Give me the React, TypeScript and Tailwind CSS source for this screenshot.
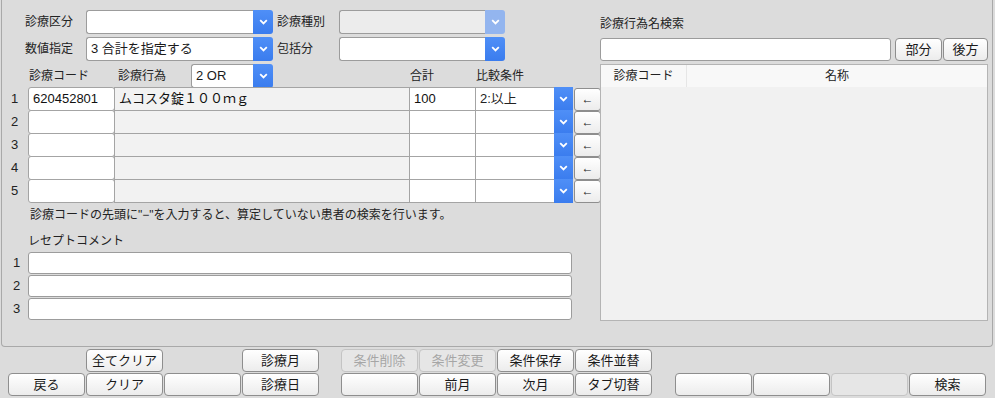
import { ReactNode } from 'react';

const FONT = '"Liberation Sans", "Noto Sans CJK JP", sans-serif';

function Chevron() {
  return (
    <svg width="9" height="6" viewBox="0 0 9 6">
      <path d="M1.2 1.2L4.5 4.4L7.8 1.2" fill="none" stroke="white" strokeWidth="1.8" />
    </svg>
  );
}

interface SelectProps {
  value?: string;
  w: string;
  disabled?: boolean;
}

function Select({ value = '', w, disabled }: SelectProps) {
  return (
    <div className={`flex shrink-0 h-[24px] ${w}`}>
      <div
        className={`flex-1 flex items-center px-[4px] text-[13px] text-[#1a1a1a] border border-r-0 border-[#9c9c9c] rounded-l-[3px] ${
          disabled ? 'bg-[#ececec]' : 'bg-white'
        }`}
      >
        {value}
      </div>
      <div
        className={`w-[20px] flex items-center justify-center rounded-r-[3px] ${
          disabled ? 'bg-[#93b5ef]' : 'bg-gradient-to-b from-[#4f8ff7] to-[#3a7cee]'
        }`}
      >
        <Chevron />
      </div>
    </div>
  );
}

function Btn({ children, w = 'w-[77px]', disabled }: { children?: ReactNode; w?: string; disabled?: boolean }) {
  return (
    <div
      className={`${w} shrink-0 h-[23px] flex items-center justify-center text-[13px] rounded-[4px] border ${
        disabled
          ? 'border-[#c4c4c4] bg-[#e6e6e6] text-[#a6a6a6]'
          : 'border-[#8e8e8e] bg-gradient-to-b from-white to-[#ececec] text-[#1a1a1a]'
      }`}
    >
      {children}
    </div>
  );
}

function Cell({ w, children, gray, first }: { w: string; children?: ReactNode; gray?: boolean; first?: boolean }) {
  return (
    <div
      className={`${w} shrink-0 h-[24px] flex items-center px-[4px] text-[13px] text-[#111] border border-[#a4a4a4] ${
        first ? 'rounded-[3px]' : '-ml-px'
      } ${gray ? 'bg-[#f2f2f2]' : 'bg-white'}`}
    >
      {children}
    </div>
  );
}

const rows = [
  { code: '620452801', name: 'ムコスタ錠１００ｍｇ', total: '100', cond: '2:以上' },
  { code: '', name: '', total: '', cond: '' },
  { code: '', name: '', total: '', cond: '' },
  { code: '', name: '', total: '', cond: '' },
  { code: '', name: '', total: '', cond: '' },
];

export default function App() {
  return (
    <div className="w-[995px] h-[398px] bg-[#dcdcdc] text-[#222] overflow-hidden" style={{ fontFamily: FONT }}>
      {/* main panel */}
      <div className="ml-[1px] w-[992px] h-[347px] border border-t-0 border-[#a9a9a9] rounded-b-[4px] flex">
        {/* left column */}
        <div className="w-[598px] shrink-0 pl-[5px] pt-[10px]">
          <div className="flex items-center">
            <div className="w-[79px] shrink-0 pl-[18px] text-[12px]">診療区分</div>
            <Select w="w-[187px]" />
            <div className="w-[66px] shrink-0 pl-[4px] text-[12px]">診療種別</div>
            <Select w="w-[166px]" disabled />
          </div>
          <div className="flex items-center mt-[3px]">
            <div className="w-[79px] shrink-0 pl-[18px] text-[12px]">数値指定</div>
            <Select w="w-[187px]" value="3 合計を指定する" />
            <div className="w-[66px] shrink-0 pl-[4px] text-[12px]">包括分</div>
            <Select w="w-[166px]" />
          </div>
          <div className="flex items-center mt-[3px] h-[23px] text-[12px]">
            <div className="w-[88px] shrink-0 pl-[22px]">診療コード</div>
            <div className="w-[96px] shrink-0 pl-[23px]">診療行為</div>
            <Select w="w-[82px]" value="2 OR" />
            <div className="ml-[137px]">合計</div>
            <div className="ml-[42px]">比較条件</div>
          </div>
          <div className="flex flex-col">
            {rows.map((r, i) => (
              <div key={i} className={`flex items-center ${i > 0 ? '-mt-px' : ''}`}>
                <div className="w-[21px] shrink-0 pl-[4px] text-[13px]">{i + 1}</div>
                <Cell w="w-[87px]" first>{r.code}</Cell>
                <Cell w="w-[296px]" gray>{r.name}</Cell>
                <Cell w="w-[67px]">{r.total}</Cell>
                <div className="-ml-px flex shrink-0 h-[24px]">
                  <div className="w-[79px] flex items-center px-[4px] text-[13px] bg-white border border-r-0 border-[#a4a4a4]">
                    {r.cond}
                  </div>
                  <div className="w-[19px] flex items-center justify-center bg-gradient-to-b from-[#4f8ff7] to-[#3a7cee]">
                    <Chevron />
                  </div>
                </div>
                <div className="ml-[1px] shrink-0 w-[27px] h-[23px] flex items-center justify-center rounded-[3px] border border-[#8e8e8e] bg-gradient-to-b from-white to-[#ececec] text-[12px]">
                  ←
                </div>
              </div>
            ))}
          </div>
          <div className="pl-[23px] mt-[4px] text-[12px] leading-[16px]">
            診療コードの先頭に"−"を入力すると、算定していない患者の検索を行います。
          </div>
          <div className="pl-[21px] mt-[10px] text-[12px] leading-[16px]">レセプトコメント</div>
          <div className="flex flex-col mt-[3px]">
            {[1, 2, 3].map((n, i) => (
              <div key={n} className={`flex items-center ${i > 0 ? 'mt-px' : ''}`}>
                <div className="w-[21px] shrink-0 pl-[6px] text-[13px]">{n}</div>
                <div className="w-[544px] shrink-0 h-[22px] bg-white border border-[#9c9c9c] rounded-[3px]" />
              </div>
            ))}
          </div>
        </div>
        {/* right column */}
        <div className="w-[389px] pt-[16px]">
          <div className="text-[12px] leading-[16px]">診療行為名検索</div>
          <div className="flex items-center mt-[6px]">
            <div className="w-[291px] h-[23px] bg-white border border-[#9c9c9c] rounded-[3px]" />
            <div className="ml-[4px] flex gap-[1px]">
              <Btn w="w-[47px]">部分</Btn>
              <Btn w="w-[45px]">後方</Btn>
            </div>
          </div>
          <div className="mt-[3px] w-[388px] h-[257px] border border-[#b4b4b4] bg-[#f1f1f1] flex flex-col">
            <div className="h-[22px] flex bg-[#f8f8f8] text-[12px]">
              <div className="w-[86px] flex items-center justify-center border-r border-[#e6e6e6]">診療コード</div>
              <div className="flex-1 flex items-center justify-center">名称</div>
            </div>
          </div>
        </div>
      </div>
      {/* bottom buttons */}
      <div className="pl-[8px] pt-[2px] flex flex-col gap-[1px]">
        <div className="flex">
          <div className="flex gap-[1px]">
            <div className="w-[77px]" />
            <Btn>全てクリア</Btn>
            <div className="w-[77px]" />
            <Btn>診療月</Btn>
          </div>
          <div className="ml-[22px] flex gap-[1px]">
            <Btn disabled>条件削除</Btn>
            <Btn disabled>条件変更</Btn>
            <Btn>条件保存</Btn>
            <Btn>条件並替</Btn>
          </div>
        </div>
        <div className="flex">
          <div className="flex gap-[1px]">
            <Btn>戻る</Btn>
            <Btn>クリア</Btn>
            <Btn />
            <Btn>診療日</Btn>
          </div>
          <div className="ml-[22px] flex gap-[1px]">
            <Btn />
            <Btn>前月</Btn>
            <Btn>次月</Btn>
            <Btn>タブ切替</Btn>
          </div>
          <div className="ml-[23px] flex gap-[1px]">
            <Btn />
            <Btn />
            <Btn disabled />
            <Btn>検索</Btn>
          </div>
        </div>
      </div>
    </div>
  );
}
